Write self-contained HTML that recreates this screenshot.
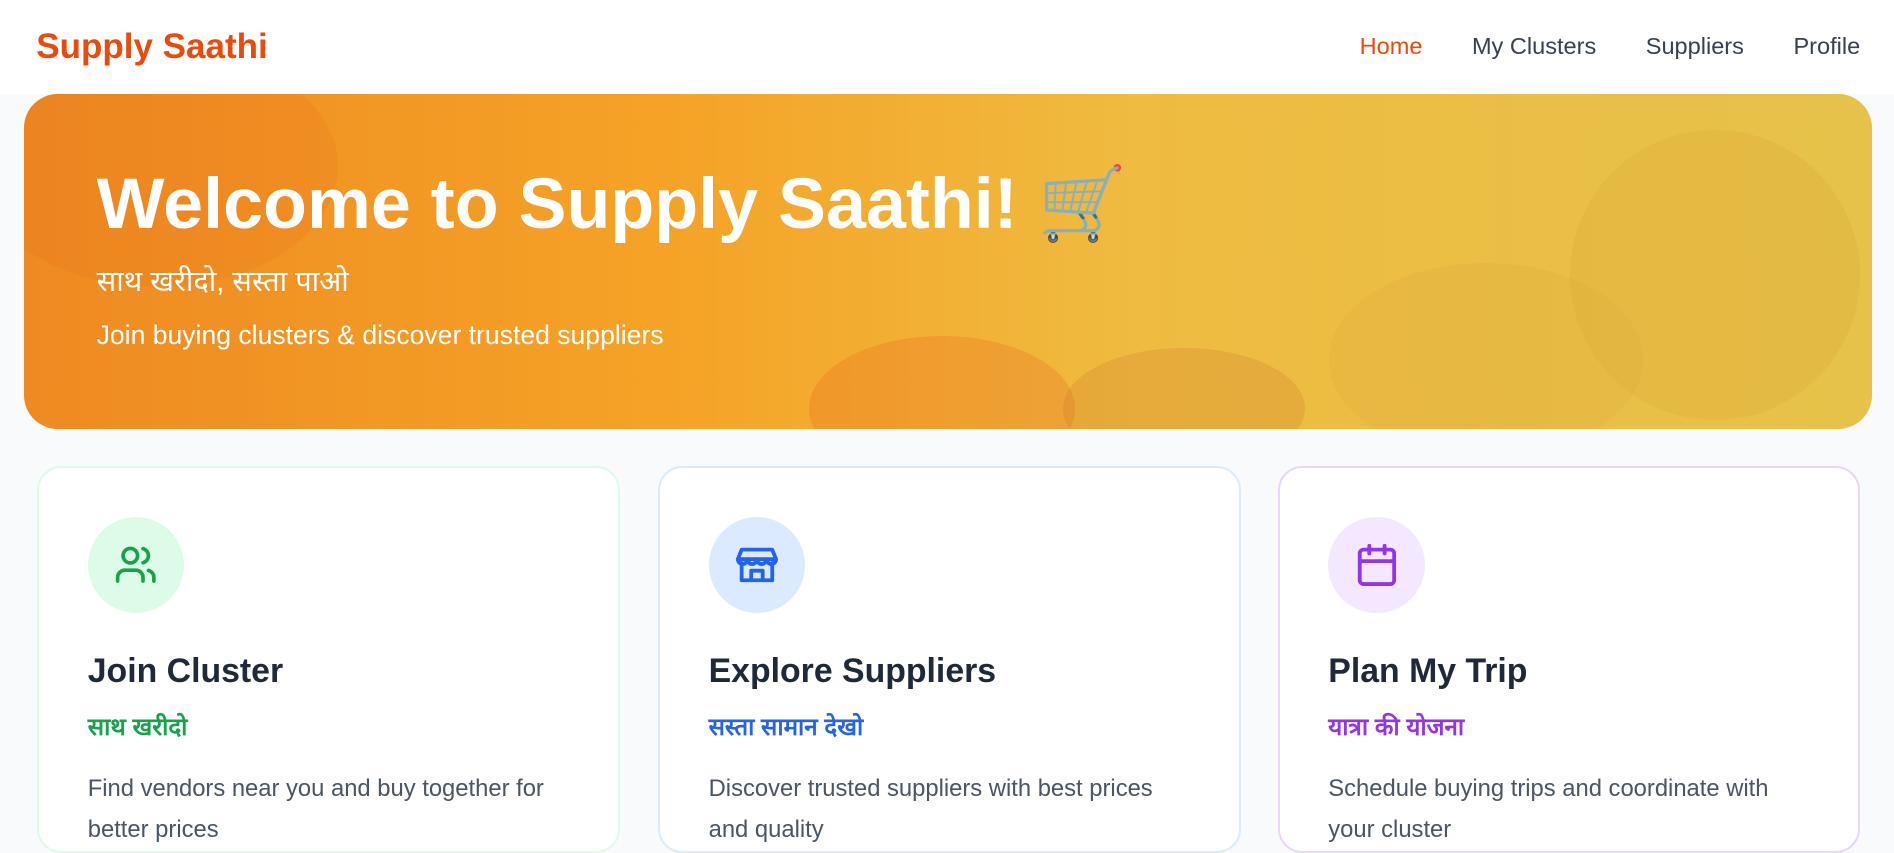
<!DOCTYPE html>
<html><head><meta charset="utf-8"><style>
html{zoom:1.20791}
*{margin:0;padding:0;box-sizing:border-box}
body{width:1568px;height:686px;overflow:hidden;background:#f8fafc;font-family:"Liberation Sans","Noto Sans CJK SC",sans-serif}
nav{height:78px;background:#fff;position:relative}
.logo{position:absolute;left:30px;top:22px;font-size:29px;font-weight:bold;color:#ea4a0c}
.links{position:absolute;right:28px;top:27px;font-size:19.5px;color:#374151}
.links span{margin-left:41px}
.hero{position:absolute;left:20px;top:78px;width:1530px;height:277px;border-radius:28px;overflow:hidden;
background:linear-gradient(90deg,#ee8a22 0%,#f5a326 35%,#efbb40 60%,#e6c24a 100%);color:#fff}
.hero .blob{position:absolute;border-radius:50%;opacity:.22}
.hero h1{position:absolute;left:60px;top:55px;font-size:59.5px;font-weight:bold;white-space:nowrap}
.hero .hi{position:absolute;left:60px;top:138px;font-size:24px}
.hero .en{position:absolute;left:60px;top:187px;font-size:22px}
.card{position:absolute;top:386px;width:482px;height:320px;background:#fff;border-radius:20px;border:2px solid}
.ic{position:absolute;left:40px;top:40px;width:80px;height:80px;border-radius:50%;display:flex;align-items:center;justify-content:center}
.card h2{position:absolute;left:40px;top:152px;font-size:28px;color:#1f2937;font-weight:bold}
.card .s{position:absolute;left:40px;top:200px;font-size:20px;font-weight:bold}
.card p{position:absolute;left:40px;top:248px;width:400px;font-size:19.7px;line-height:34px;color:#4b5563}
</style></head><body>
<nav><div class="logo">Supply Saathi</div>
<div class="links"><span style="color:#ea4a0c">Home</span><span>My Clusters</span><span>Suppliers</span><span>Profile</span></div></nav>
<div class="hero">
<div class="blob" style="left:650px;top:200px;width:220px;height:120px;background:#e8561a"></div>
<div class="blob" style="left:860px;top:210px;width:200px;height:100px;background:#c9742a"></div>
<div class="blob" style="left:1280px;top:30px;width:240px;height:240px;background:#d4a532"></div>
<div class="blob" style="left:1080px;top:140px;width:260px;height:160px;background:#d9a93a"></div>
<div class="blob" style="left:-40px;top:-40px;width:300px;height:200px;background:#e8701a"></div>
<h1>Welcome to Supply Saathi! 🛒</h1>
<div class="hi">साथ खरीदो, सस्ता पाओ</div>
<div class="en">Join buying clusters &amp; discover trusted suppliers</div>
</div>
<div class="card" style="left:31px;border-color:#dcfce7">
<div class="ic" style="background:#dcfce7"><svg width="36" height="36" viewBox="0 0 24 24" fill="none" stroke="#16a34a" stroke-width="2" stroke-linecap="round" stroke-linejoin="round"><path d="M16 21v-2a4 4 0 0 0-4-4H6a4 4 0 0 0-4 4v2"/><circle cx="9" cy="7" r="4"/><path d="M22 21v-2a4 4 0 0 0-3-3.87M16 3.13a4 4 0 0 1 0 7.75"/></svg></div>
<h2>Join Cluster</h2><div class="s" style="color:#16a34a">साथ खरीदो</div>
<p>Find vendors near you and buy together for better prices</p></div>
<div class="card" style="left:545px;border-color:#dbeafe">
<div class="ic" style="background:#dbeafe"><svg width="38" height="38" viewBox="0 0 24 24" fill="none" stroke="#2563eb" stroke-width="2" stroke-linecap="round" stroke-linejoin="round"><path d="M4 4h16l2 5H2z"/><path d="M2 9a2.5 2.5 0 0 0 5 0a2.5 2.5 0 0 0 5 0a2.5 2.5 0 0 0 5 0a2.5 2.5 0 0 0 5 0"/><path d="M4 11v9h16v-9"/><path d="M9 20v-5h6v5"/></svg></div>
<h2>Explore Suppliers</h2><div class="s" style="color:#2563eb">सस्ता सामान देखो</div>
<p>Discover trusted suppliers with best prices and quality</p></div>
<div class="card" style="left:1058px;border-color:#e9d5ff">
<div class="ic" style="background:#f3e8ff"><svg width="38" height="38" viewBox="0 0 24 24" fill="none" stroke="#9333ea" stroke-width="2" stroke-linecap="round" stroke-linejoin="round"><rect x="3" y="4" width="18" height="18" rx="2"/><path d="M16 2v4M8 2v4M3 10h18"/></svg></div>
<h2>Plan My Trip</h2><div class="s" style="color:#9333ea">यात्रा की योजना</div>
<p>Schedule buying trips and coordinate with your cluster</p></div>
</body></html>
